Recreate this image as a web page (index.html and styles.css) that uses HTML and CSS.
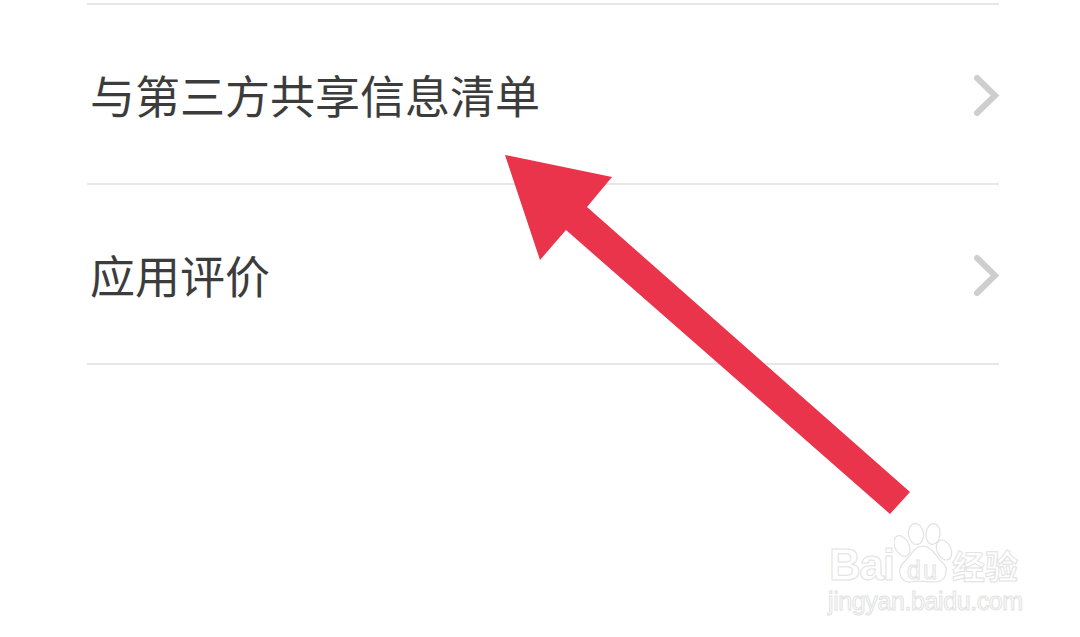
FILE: index.html
```html
<!DOCTYPE html>
<html lang="zh-CN">
<head>
<meta charset="utf-8">
<title>设置</title>
<link rel="stylesheet" href="styles.css">
</head>
<body>
<main class="page">
  <ul class="list">
    <li class="row"><span class="label">与第三方共享信息清单</span>
      <svg class="chev" viewBox="0 0 25 41"><path d="M3 3 L21 20.500 L3 38"/></svg></li>
    <li class="row"><span class="label">应用评价</span>
      <svg class="chev" viewBox="0 0 25 41"><path d="M3 3 L21 20.500 L3 38"/></svg></li>
  </ul>
  <svg class="arrow" viewBox="0 0 1080 637"><polygon points="505,155 612,177 587,207 910,492 890,514 566,230 540,260"/></svg>
  <div class="mark">
    <svg class="paw" viewBox="0 0 60 62">
      <ellipse cx="8" cy="23" rx="7" ry="11" transform="rotate(-28 8 23)"/>
      <ellipse cx="22" cy="11" rx="7.500" ry="10.500" transform="rotate(-8 22 11)"/>
      <ellipse cx="39" cy="11" rx="7" ry="10.500" transform="rotate(6 39 11)"/>
      <ellipse cx="50" cy="27" rx="7" ry="10.500" transform="rotate(-25 50 27)"/>
      <path d="M29 23 C38 23 41 33 47 38 C56 45 53 59 41 59 C33 59 25 57 17 59 C6 60 2 47 10 39 C17 33 20 23 29 23 Z"/>
    </svg>
    <span class="mark-bai">Bai</span>
    <span class="mark-du">du</span>
    <span class="mark-jy">经验</span>
    <span class="mark-url">jingyan.baidu.com</span>
  </div>
</main>
</body>
</html>
```
FILE: styles.css
```css
html, body { margin: 0; padding: 0; background: #fff; }
body { width: 1080px; height: 637px; overflow: hidden; font-family: "Noto Sans CJK SC", "Liberation Sans", sans-serif; }
.page { position: relative; width: 1080px; height: 637px; padding: 3px 81px 0 87px; box-sizing: border-box; }
.list { list-style: none; margin: 0; padding: 0; border-top: 2px solid #e7e7e7; }
.row { box-sizing: border-box; height: 180px; border-bottom: 2px solid #e7e7e7; display: flex; align-items: center; justify-content: space-between; padding: 2px 0 0 3px; }
.label { font-size: 45px; line-height: 60px; color: #3c3c3c; font-weight: 400; }
.chev { width: 25px; height: 41px; overflow: visible; }
.chev path { fill: none; stroke: #cecece; stroke-width: 6; stroke-linecap: round; stroke-linejoin: miter; }
.arrow { position: absolute; left: 0; top: 0; width: 1080px; height: 637px; }
.arrow polygon { fill: #ea344b; }
.mark { position: absolute; left: 826px; top: 520px; width: 200px; height: 100px; font-family: "Liberation Sans", sans-serif; color: #fff; -webkit-text-stroke: 1px #e2e2e2; }
.mark span { position: absolute; white-space: nowrap; }
.mark-bai { left: 3px; top: 20px; font-size: 44px; line-height: 50px; font-weight: 700; letter-spacing: -1.300px; }
.mark-du { left: 81px; top: 36px; font-size: 25px; line-height: 28px; letter-spacing: 2px; }
.mark-jy { left: 126px; top: 26px; font-size: 33px; line-height: 38px; font-family: "Noto Sans CJK SC", sans-serif; font-weight: 700; }
.mark-url { left: 2px; top: 67px; font-size: 25px; line-height: 28px; letter-spacing: -.4px; }
.paw { position: absolute; left: 68px; top: 3px; width: 60px; height: 62px; }
.paw ellipse, .paw path { fill: #fff; stroke: #e2e2e2; stroke-width: 1.200; }
```
